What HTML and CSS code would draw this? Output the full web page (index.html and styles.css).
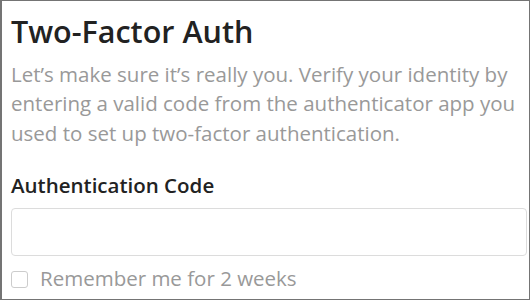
FILE: index.html
```html
<!DOCTYPE html>
<html lang="en">
<head>
<meta charset="utf-8">
<title>Two-Factor Auth</title>
<link rel="stylesheet" href="styles.css">
</head>
<body>
<div class="frame">
  <h1 class="title">Two-Factor Auth</h1>
  <p class="intro">Let’s make sure it’s really you. Verify your identity by entering a valid code from the authenticator app you used to set up two-factor authentication.</p>
  <label class="label" for="code">Authentication Code</label>
  <input class="code-input" id="code" type="text">
  <label class="remember">
    <span class="box"></span>
    <span class="remember-text">Remember me for 2 weeks</span>
  </label>
</div>
</body>
</html>
```
FILE: styles.css
```css
html, body {
  margin: 0;
  padding: 0;
  background: #fff;
}
.frame {
  box-sizing: border-box;
  width: 530px;
  height: 300px;
  border: 1px solid #747474;
  border-left-width: 2px;
  padding: 12px 2px 0 9px;
  font-family: "Open Sans", "Liberation Sans", sans-serif;
  display: flex;
  flex-direction: column;
  overflow: hidden;
}
.title {
  margin: 0;
  font-size: 30.5px;
  line-height: 36px;
  font-weight: 600;
  color: #222;
}
.intro {
  margin: 11px 0 0;
  font-size: 20.5px;
  line-height: 29.3px;
  color: #999;
}
.label {
  margin-top: 24px;
  font-size: 20.5px;
  line-height: 26px;
  font-weight: 600;
  color: #222;
}
.code-input {
  box-sizing: border-box;
  flex: none;
  margin: 10.5px 0 0;
  width: 100%;
  height: 48px;
  border: 1px solid #dcdcdc;
  border-radius: 4px;
  background: #fff;
  font: inherit;
  outline: none;
}
.remember {
  display: flex;
  align-items: flex-start;
  gap: 12px;
  margin-top: 9.75px;
}
.box {
  box-sizing: border-box;
  flex: none;
  width: 17px;
  height: 17px;
  margin-top: 5.25px;
  border: 1px solid #ccc;
  border-radius: 3px;
}
.remember-text {
  font-size: 20.5px;
  line-height: 24px;
  color: #999;
}
```
